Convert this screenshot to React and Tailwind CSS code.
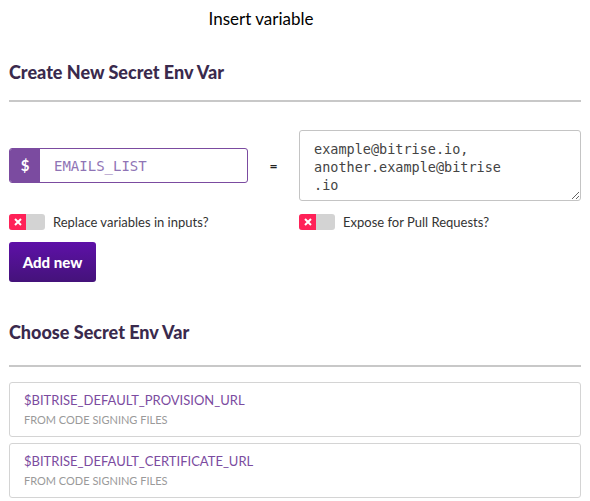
import React from "react";

const vars = [
  { key: "$BITRISE_DEFAULT_PROVISION_URL", source: "FROM CODE SIGNING FILES" },
  { key: "$BITRISE_DEFAULT_CERTIFICATE_URL", source: "FROM CODE SIGNING FILES" },
];

function Toggle({ label }) {
  return (
    <div className="flex h-[16px] items-center">
      <div className="flex h-[16px] w-[36px] overflow-hidden rounded-[3px] bg-[#d3d3d3]">
        <div className="flex h-full w-[17px] items-center justify-center bg-[#ff2158]">
          <svg width="8" height="8" viewBox="0 0 8 8">
            <path d="M1 1L7 7M7 1L1 7" stroke="#fff" strokeWidth="2" />
          </svg>
        </div>
      </div>
      <span className="ml-[8px] text-[13px] leading-[16px] text-[#333]">{label}</span>
    </div>
  );
}

export default function App() {
  return (
    <div className="min-h-[501px] w-full bg-white font-['Lato',sans-serif] text-[#222]">
      <div className="flex h-[38px] items-center justify-center pr-[68px] text-[17px] text-black">
        Insert variable
      </div>

      <div className="px-[9px]">
        <h2 className="mt-[22px] text-[18px] font-black leading-[24px] text-[#3a2a4d]">
          Create New Secret Env Var
        </h2>
        <hr className="mt-[16px] border-t-2 border-[#c8c8c8]" />

        <div className="mt-[28px] flex items-start">
          <div className="mt-[18px] flex h-[35px] w-[239px] overflow-hidden rounded-[3px] border border-[#7b4ba0]">
            <div className="flex w-[30px] items-center justify-center bg-[#7b4ba0] text-[15px] font-bold text-white">
              $
            </div>
            <div className="flex flex-1 items-center px-[14px] font-['DejaVu_Sans_Mono',monospace] text-[14px] leading-[20px] text-[#8f74b5]">
              EMAILS_LIST
            </div>
          </div>
          <div className="mt-[18px] flex h-[35px] w-[51px] items-center justify-center text-[14px] font-bold">
            =
          </div>
          <textarea
            className="h-[71px] w-[282px] resize-y rounded-[3px] border border-[#c4c4c4] px-[14px] py-[9px] font-['DejaVu_Sans_Mono',monospace] text-[13.5px] leading-[18px] text-[#444] outline-none"
            defaultValue={"example@bitrise.io,\nanother.example@bitrise\n.io"}
          />
        </div>

        <div className="mt-[13px] flex">
          <div className="w-[290px]">
            <Toggle label="Replace variables in inputs?" />
          </div>
          <Toggle label="Expose for Pull Requests?" />
        </div>

        <button className="mt-[12px] block h-[40px] w-[87px] rounded-[3px] bg-gradient-to-b from-[#5e10a8] to-[#44127a] text-[15px] font-black text-white">
          Add new
        </button>

        <h2 className="mt-[38px] text-[18px] font-black leading-[24px] text-[#3a2a4d]">
          Choose Secret Env Var
        </h2>
        <hr className="mt-[21px] border-t-2 border-[#c8c8c8]" />

        <div className="mt-[15px] flex flex-col gap-[6px]">
          {vars.map((v, i) => (
            <div
              key={i}
              className="h-[55px] rounded-[3px] border border-[#d4d4d4] px-[14px] pt-[8px]"
            >
              <div className="text-[13px] leading-[18px] text-[#7b4ba0]">{v.key}</div>
              <div className="mt-[4px] text-[11px] leading-[14px] text-[#9a9a9a]">{v.source}</div>
            </div>
          ))}
        </div>
      </div>
    </div>
  );
}
